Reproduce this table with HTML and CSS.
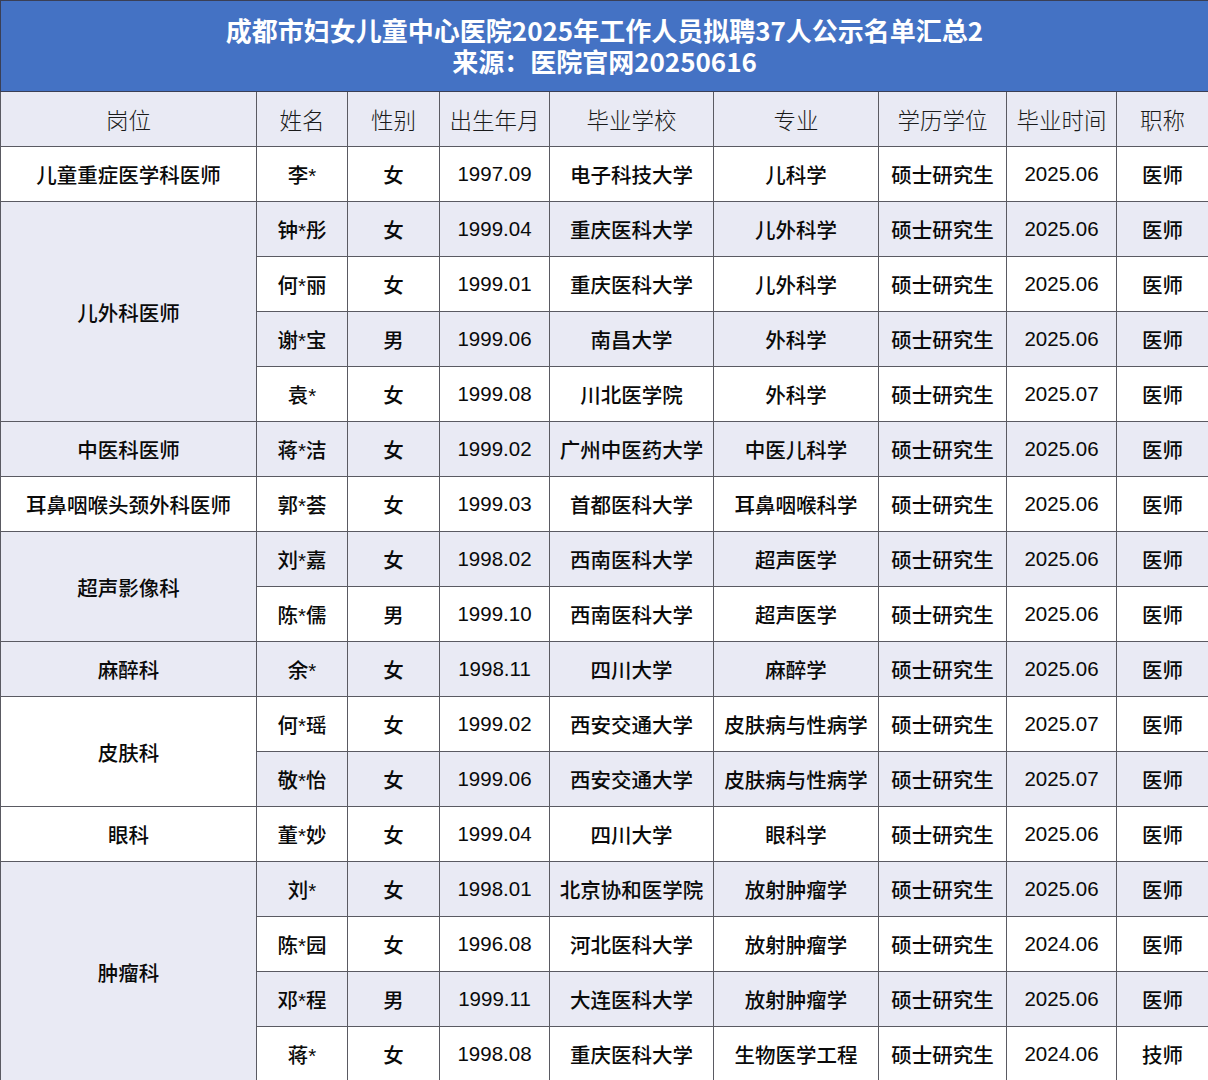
FILE: index.html
```html
<!DOCTYPE html>
<html lang="zh">
<head>
<meta charset="utf-8">
<link rel="stylesheet" href="styles.css">
</head>
<body>
<table class="sheet">
<colgroup>
<col class="c1"><col class="c2"><col class="c3"><col class="c4"><col class="c5"><col class="c6"><col class="c7"><col class="c8"><col class="c9">
</colgroup>
<thead>
<tr class="title-row"><th colspan="9" class="title"><div class="t-line">成都市妇女儿童中心医院2025年工作人员拟聘37人公示名单汇总2</div><div class="t-line">来源：医院官网20250616</div></th></tr>
<tr class="head alt"><th>岗位</th><th>姓名</th><th>性别</th><th>出生年月</th><th>毕业学校</th><th>专业</th><th>学历学位</th><th>毕业时间</th><th>职称</th></tr>
</thead>
<tbody>
<tr><td>儿童重症医学科医师</td><td>李*</td><td>女</td><td>1997.09</td><td>电子科技大学</td><td>儿科学</td><td>硕士研究生</td><td>2025.06</td><td>医师</td></tr>
<tr class="alt"><td rowspan="4">儿外科医师</td><td>钟*彤</td><td>女</td><td>1999.04</td><td>重庆医科大学</td><td>儿外科学</td><td>硕士研究生</td><td>2025.06</td><td>医师</td></tr>
<tr><td>何*丽</td><td>女</td><td>1999.01</td><td>重庆医科大学</td><td>儿外科学</td><td>硕士研究生</td><td>2025.06</td><td>医师</td></tr>
<tr class="alt"><td>谢*宝</td><td>男</td><td>1999.06</td><td>南昌大学</td><td>外科学</td><td>硕士研究生</td><td>2025.06</td><td>医师</td></tr>
<tr><td>袁*</td><td>女</td><td>1999.08</td><td>川北医学院</td><td>外科学</td><td>硕士研究生</td><td>2025.07</td><td>医师</td></tr>
<tr class="alt"><td>中医科医师</td><td>蒋*洁</td><td>女</td><td>1999.02</td><td>广州中医药大学</td><td>中医儿科学</td><td>硕士研究生</td><td>2025.06</td><td>医师</td></tr>
<tr><td>耳鼻咽喉头颈外科医师</td><td>郭*荟</td><td>女</td><td>1999.03</td><td>首都医科大学</td><td>耳鼻咽喉科学</td><td>硕士研究生</td><td>2025.06</td><td>医师</td></tr>
<tr class="alt"><td rowspan="2">超声影像科</td><td>刘*嘉</td><td>女</td><td>1998.02</td><td>西南医科大学</td><td>超声医学</td><td>硕士研究生</td><td>2025.06</td><td>医师</td></tr>
<tr><td>陈*儒</td><td>男</td><td>1999.10</td><td>西南医科大学</td><td>超声医学</td><td>硕士研究生</td><td>2025.06</td><td>医师</td></tr>
<tr class="alt"><td>麻醉科</td><td>余*</td><td>女</td><td>1998.11</td><td>四川大学</td><td>麻醉学</td><td>硕士研究生</td><td>2025.06</td><td>医师</td></tr>
<tr><td rowspan="2">皮肤科</td><td>何*瑶</td><td>女</td><td>1999.02</td><td>西安交通大学</td><td>皮肤病与性病学</td><td>硕士研究生</td><td>2025.07</td><td>医师</td></tr>
<tr class="alt"><td>敬*怡</td><td>女</td><td>1999.06</td><td>西安交通大学</td><td>皮肤病与性病学</td><td>硕士研究生</td><td>2025.07</td><td>医师</td></tr>
<tr><td>眼科</td><td>董*妙</td><td>女</td><td>1999.04</td><td>四川大学</td><td>眼科学</td><td>硕士研究生</td><td>2025.06</td><td>医师</td></tr>
<tr class="alt"><td rowspan="4">肿瘤科</td><td>刘*</td><td>女</td><td>1998.01</td><td>北京协和医学院</td><td>放射肿瘤学</td><td>硕士研究生</td><td>2025.06</td><td>医师</td></tr>
<tr><td>陈*园</td><td>女</td><td>1996.08</td><td>河北医科大学</td><td>放射肿瘤学</td><td>硕士研究生</td><td>2024.06</td><td>医师</td></tr>
<tr class="alt"><td>邓*程</td><td>男</td><td>1999.11</td><td>大连医科大学</td><td>放射肿瘤学</td><td>硕士研究生</td><td>2025.06</td><td>医师</td></tr>
<tr><td>蒋*</td><td>女</td><td>1998.08</td><td>重庆医科大学</td><td>生物医学工程</td><td>硕士研究生</td><td>2024.06</td><td>技师</td></tr>
</tbody>
</table>
</body>
</html>
```
FILE: styles.css
```css
html, body {
  margin: 0;
  padding: 0;
  background: #ffffff;
}
.sheet {
  width: 1208px;
  border-collapse: collapse;
  table-layout: fixed;
  font-family: "Liberation Sans", "Noto Sans CJK SC", sans-serif;
  color: #000;
}
.c1 { width: 256px; }
.c2 { width: 91px; }
.c3 { width: 92px; }
.c4 { width: 110px; }
.c5 { width: 164px; }
.c6 { width: 165px; }
.c7 { width: 128px; }
.c8 { width: 110px; }
.c9 { width: 92px; }
.title-row th {
  height: 88px;
  background: #4472c4;
  color: #ffffff;
  font-family: "Noto Sans CJK SC", sans-serif;
  font-weight: 700;
  font-size: 26px;
  padding: 0 0 2px 0;
  border: 1px solid #3a3f55;
  text-align: center;
}
.t-line {
  height: 31px;
  line-height: 31px;
}
.sheet td, .head th {
  border: 1px solid #5a5a62;
  text-align: center;
  vertical-align: middle;
  padding: 0;
  height: 54px;
}
.head th {
  font-family: "Noto Sans CJK SC", sans-serif;
  font-weight: 300;
  font-size: 22.5px;
  color: #1a1a1a;
}
.sheet td {
  font-family: "Liberation Sans", "Noto Sans CJK SC", sans-serif;
  font-size: 20.5px;
  font-weight: 500;
  color: #0a0a0a;
}
.alt td, .alt th {
  background: #e9eaf4;
}
.alt td[rowspan] {
  background: #e9eaf4;
}
tr:not(.alt) td[rowspan] {
  background: #ffffff;
}
```
